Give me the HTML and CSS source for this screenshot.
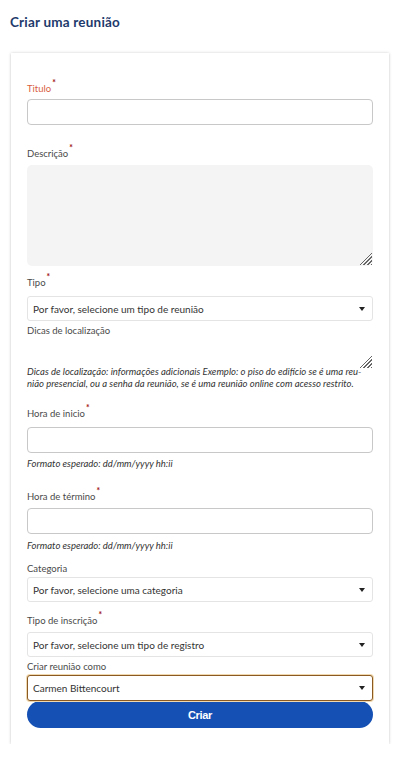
FILE: index.html
```html
<!DOCTYPE html>
<html lang="pt">
<head>
<meta charset="utf-8">
<title>Criar uma reunião</title>
<link rel="stylesheet" href="styles.css">
</head>
<body>
<h1 class="page-title">Criar uma reunião</h1>
<form class="card">
  <div class="field f-titulo">
    <label class="label label-error">Titulo<span class="req">*</span></label>
    <input class="input" type="text">
  </div>
  <div class="field f-desc">
    <label class="label">Descrição<span class="req">*</span></label>
    <div class="area-wrap">
      <textarea class="area area-filled"></textarea>
      <span class="grip"></span>
    </div>
  </div>
  <div class="field f-tipo">
    <label class="label">Tipo<span class="req">*</span></label>
    <div class="select-wrap">
      <select class="select"><option>Por favor, selecione um tipo de reunião</option></select>
      <span class="caret"></span>
    </div>
  </div>
  <div class="field f-dicas">
    <label class="label">Dicas de localização</label>
    <div class="area-wrap">
      <textarea class="area area-plain"></textarea>
      <span class="grip"></span>
    </div>
    <p class="help help-dicas">Dicas de localização: informações adicionais Exemplo: o piso do edifício se é uma reu-<br>nião presencial, ou a senha da reunião, se é uma reunião online com acesso restrito.</p>
  </div>
  <div class="field f-inicio">
    <label class="label">Hora de inicio<span class="req">*</span></label>
    <input class="input" type="text">
    <p class="help help-fmt">Formato esperado: dd/mm/yyyy hh:ii</p>
  </div>
  <div class="field f-termino">
    <label class="label">Hora de término<span class="req">*</span></label>
    <input class="input" type="text">
    <p class="help help-fmt2">Formato esperado: dd/mm/yyyy hh:ii</p>
  </div>
  <div class="field f-cat">
    <label class="label">Categoria</label>
    <div class="select-wrap">
      <select class="select"><option>Por favor, selecione uma categoria</option></select>
      <span class="caret"></span>
    </div>
  </div>
  <div class="field f-insc">
    <label class="label">Tipo de inscrição<span class="req">*</span></label>
    <div class="select-wrap">
      <select class="select"><option>Por favor, selecione um tipo de registro</option></select>
      <span class="caret"></span>
    </div>
  </div>
  <div class="field f-como">
    <label class="label">Criar reunião como</label>
    <div class="select-wrap">
      <select class="select select-focus"><option>Carmen Bittencourt</option></select>
      <span class="caret"></span>
    </div>
  </div>
  <button class="btn" type="button">Criar</button>
</form>
</body>
</html>
```
FILE: styles.css
```css
* { box-sizing: border-box; }
html, body { margin: 0; padding: 0; background: #fff; }
body {
  font-family: Lato, "Open Sans", "Liberation Sans", sans-serif;
  color: #444;
  width: 406px;
}
.page-title {
  margin: 0;
  padding: 14px 0 0 10px;
  height: 53px;
  font-size: 13.5px;
  line-height: 16px;
  font-weight: 700;
  color: #1e3a6c;
  letter-spacing: 0.2px;
}
.card {
  margin: 0 0 0 11px;
  width: 378px;
  padding: 30px 16px 16px;
  background: #fff;
  box-shadow: 0 0 3px rgba(0,0,0,0.18), 0 1px 2px rgba(0,0,0,0.08);
  display: flex;
  flex-direction: column;
}
.field { display: flex; flex-direction: column; }
.label {
  font-size: 9.5px;
  line-height: 12px;
  height: 12px;
  color: #4a4a4a;
  position: relative;
}
.label-error { color: #d9603f; }
.req {
  color: #a01010;
  font-size: 8.5px;
  font-weight: 700;
  position: relative;
  top: -6px;
  margin-left: 1px;
}
.input {
  display: block;
  width: 100%;
  height: 26px;
  border: 1px solid #c8c8c8;
  border-radius: 4px;
  background: #fff;
  font: inherit;
  margin: 0;
}
.area-wrap { position: relative; }
.area {
  display: block;
  width: 100%;
  margin: 0;
  resize: none;
  font: inherit;
  border: none;
  border-radius: 5px;
}
.area-filled { height: 101px; background: #f4f4f4; }
.area-plain { height: 29px; background: transparent; }
.grip {
  position: absolute;
  right: 1px;
  bottom: 1px;
  width: 13px;
  height: 13px;
  background: repeating-linear-gradient(135deg, transparent 0 1.6px, #666 1.6px 2.6px);
  clip-path: polygon(100% 0, 100% 100%, 0 100%);
}
.select-wrap { position: relative; }
.select {
  display: block;
  width: 100%;
  height: 25px;
  appearance: none;
  -webkit-appearance: none;
  border: 1px solid #e4e4e4;
  border-radius: 3px;
  background: #fff;
  padding: 0 0 0 5px;
  margin: 0;
  font-family: inherit;
  font-size: 10px;
  color: #333;
}
.select-focus {
  height: 26px;
  border: 1px solid #8a5a22;
  box-shadow: 0 0 0 1px #f0d8b0;
}
.caret {
  position: absolute;
  right: 8px;
  top: 50%;
  margin-top: -2px;
  width: 0;
  height: 0;
  border-left: 3px solid transparent;
  border-right: 3px solid transparent;
  border-top: 4px solid #222;
}
.help {
  margin: 0;
  font-size: 9.5px;
  line-height: 12px;
  font-style: italic;
  color: #333;
  white-space: nowrap;
  position: relative;
}
.help-dicas { margin-top: -3px; }
.f-titulo .label { margin-bottom: 4px; }
.f-desc { margin-top: 23px; }
.f-desc .label { margin-bottom: 5px; }
.f-tipo { margin-top: 11px; }
.f-tipo .label { margin-bottom: 7px; }
.f-dicas { margin-top: 4px; }
.f-dicas .label { margin-bottom: 3px; }
.f-inicio { margin-top: 18px; }
.f-inicio .label { margin-bottom: 7px; }
.help-fmt { margin-top: 5px; }
.f-termino { margin-top: 21px; }
.f-termino .label { margin-bottom: 5px; }
.help-fmt2 { margin-top: 6px; }
.f-cat { margin-top: 11px; }
.f-cat .label { margin-bottom: 2px; }
.f-insc { margin-top: 13px; }
.f-insc .label { margin-bottom: 5px; }
.f-como { margin-top: 4px; }
.f-como .label { margin-bottom: 2px; }
.btn {
  display: block;
  width: 100%;
  height: 27px;
  margin: 0;
  border: none;
  border-radius: 14px;
  background: #1551b5;
  color: #fff;
  font-family: "Liberation Sans", Arial, sans-serif;
  font-weight: 700;
  font-size: 11px;
  letter-spacing: -0.3px;
}
```
